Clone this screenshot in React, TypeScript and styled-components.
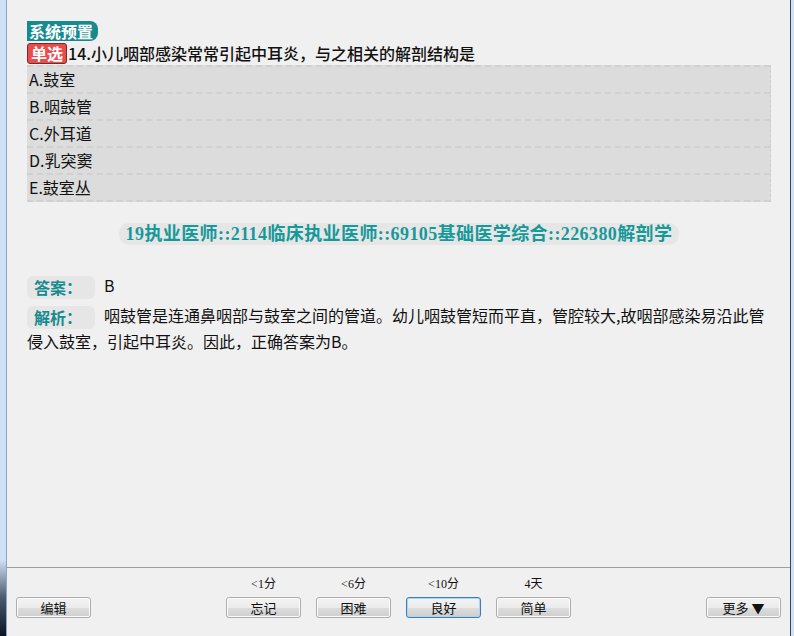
import * as React from "react";
import styled, { createGlobalStyle } from "styled-components";

const GlobalStyle = createGlobalStyle`
  html, body {
    margin: 0;
    padding: 0;
    background: #f0f0f0;
  }
  * {
    box-sizing: border-box;
  }
`;

const Window = styled.div`
  display: flex;
  width: 794px;
  height: 636px;
  background: #f0f0f0;
  font-family: "Noto Sans CJK SC", "Noto Sans", sans-serif;
  color: #111;
  overflow: hidden;
`;

const LeftFrame = styled.div`
  width: 7px;
  flex: none;
  background: linear-gradient(
    to bottom,
    #cfe1f6 0%,
    #cfe1f6 88%,
    #4a5a70 94%,
    #0b1424 100%
  );
  border-right: 1px solid #8ea4bd;
`;

const RightFrame = styled.div`
  width: 4px;
  flex: none;
  background: #cfe1f6;
  border-left: 1px solid #3b4656;
`;

const Main = styled.div`
  flex: 1;
  display: flex;
  flex-direction: column;
  min-width: 0;
`;

const Content = styled.div`
  flex: 1;
  padding: 21px 19px 0 20px;
`;

const SourceTag = styled.div`
  width: fit-content;
  height: 20px;
  line-height: 20px;
  padding: 0 5px 0 2px;
  background: #178a90;
  color: #fff;
  font-weight: 700;
  font-size: 16px;
  border-radius: 0 8px 8px 0;
`;

const QuestionRow = styled.div`
  display: flex;
  align-items: center;
  height: 24px;
  gap: 1px;
`;

const TypeBadge = styled.span`
  display: inline-block;
  height: 21px;
  line-height: 19px;
  padding: 0 3px;
  background: #ec4b4b;
  color: #fff;
  font-weight: 700;
  font-size: 16px;
  border: 1px solid #6a3030;
  border-radius: 3px;
`;

const QuestionText = styled.span`
  font-size: 16px;
  font-weight: 500;
`;

const Options = styled.div`
  background: #dcdcdc;
  border-right: 1px dashed #cdcdcd;
`;

const OptionRow = styled.div`
  height: 27px;
  line-height: 25px;
  padding-left: 2px;
  font-size: 16px;
  border-top: 2px dashed #d0d0d0;
  &:last-child {
    height: 29px;
    border-bottom: 2px dashed #d0d0d0;
  }
`;

const CategoryLine = styled.div`
  display: flex;
  justify-content: center;
  margin-top: 21px;
`;

const CategoryPill = styled.span`
  display: inline-block;
  padding: 0 7px;
  height: 22px;
  line-height: 22px;
  border-radius: 10px;
  background: #e6e6e6;
  color: #17999a;
  font-family: "Liberation Serif", "Noto Sans CJK SC", serif;
  font-weight: 700;
  font-size: 18px;
  letter-spacing: 0.4px;
`;

const AnswerBlock = styled.div`
  margin-top: 25px;
  font-size: 16px;
`;

const Paragraph = styled.p<{ $lh: number; $gap?: number }>`
  margin: 0 0 ${(p) => p.$gap ?? 0}px 0;
  line-height: ${(p) => p.$lh}px;
`;

const Label = styled.span`
  display: inline-block;
  width: 68px;
  height: 23px;
  line-height: 23px;
  padding-left: 7px;
  margin-right: 9px;
  border-radius: 6px;
  background: #e6e6e6;
  color: #178a8e;
  font-weight: 700;
  font-size: 16px;
  vertical-align: middle;
`;

const Footer = styled.div`
  height: 69px;
  border-top: 1px solid #a0a0a0;
  display: grid;
  grid-template-columns: 1fr auto 1fr;
  align-items: end;
  padding: 0 9px 18px 9px;
`;

const CenterGroup = styled.div`
  display: flex;
  gap: 15px;
`;

const Choice = styled.div`
  display: flex;
  flex-direction: column;
  align-items: center;
  gap: 6px;
`;

const Interval = styled.span`
  font-family: "Liberation Serif", "Noto Sans CJK SC", serif;
  font-size: 12px;
  line-height: 14px;
  color: #111;
`;

const Button = styled.button<{ $focused?: boolean }>`
  width: 75px;
  height: 21px;
  padding: 0;
  font-family: "Noto Sans CJK SC", sans-serif;
  font-size: 13px;
  line-height: 19px;
  color: #111;
  background: linear-gradient(to bottom, #f3f3f3 0%, #ebebeb 50%, #dddddd 51%, #cfcfcf 100%);
  border: 1px solid ${(p) => (p.$focused ? "#3c7fb1" : "#acacac")};
  box-shadow: ${(p) => (p.$focused ? "inset 0 0 0 1px #a8d6f4" : "inset 0 0 0 1px #fcfcfc")};
  border-radius: 3px;
`;

const LeftSlot = styled.div`
  justify-self: start;
`;

const RightSlot = styled.div`
  justify-self: end;
`;

const options = ["A.鼓室", "B.咽鼓管", "C.外耳道", "D.乳突窦", "E.鼓室丛"];

const choices = [
  { time: "<1分", text: "忘记" },
  { time: "<6分", text: "困难" },
  { time: "<10分", text: "良好", focused: true },
  { time: "4天", text: "简单" },
];

export default function App() {
  return (
    <>
      <GlobalStyle />
      <Window>
        <LeftFrame />
        <Main>
          <Content>
            <SourceTag>系统预置</SourceTag>
            <QuestionRow>
              <TypeBadge>单选</TypeBadge>
              <QuestionText>14.小儿咽部感染常常引起中耳炎，与之相关的解剖结构是</QuestionText>
            </QuestionRow>
            <Options>
              {options.map((o) => (
                <OptionRow key={o}>{o}</OptionRow>
              ))}
            </Options>
            <CategoryLine>
              <CategoryPill>19执业医师::2114临床执业医师::69105基础医学综合::226380解剖学</CategoryPill>
            </CategoryLine>
            <AnswerBlock>
              <Paragraph $lh={30} $gap={3}>
                <Label>答案：</Label>B
              </Paragraph>
              <Paragraph $lh={25}>
                <Label>解析：</Label>
                咽鼓管是连通鼻咽部与鼓室之间的管道。幼儿咽鼓管短而平直，管腔较大,故咽部感染易沿此管侵入鼓室，引起中耳炎。因此，正确答案为B。
              </Paragraph>
            </AnswerBlock>
          </Content>
          <Footer>
            <LeftSlot>
              <Button>编辑</Button>
            </LeftSlot>
            <CenterGroup>
              {choices.map((c) => (
                <Choice key={c.text}>
                  <Interval>{c.time}</Interval>
                  <Button $focused={c.focused}>{c.text}</Button>
                </Choice>
              ))}
            </CenterGroup>
            <RightSlot>
              <Button>更多 ▼</Button>
            </RightSlot>
          </Footer>
        </Main>
        <RightFrame />
      </Window>
    </>
  );
}
